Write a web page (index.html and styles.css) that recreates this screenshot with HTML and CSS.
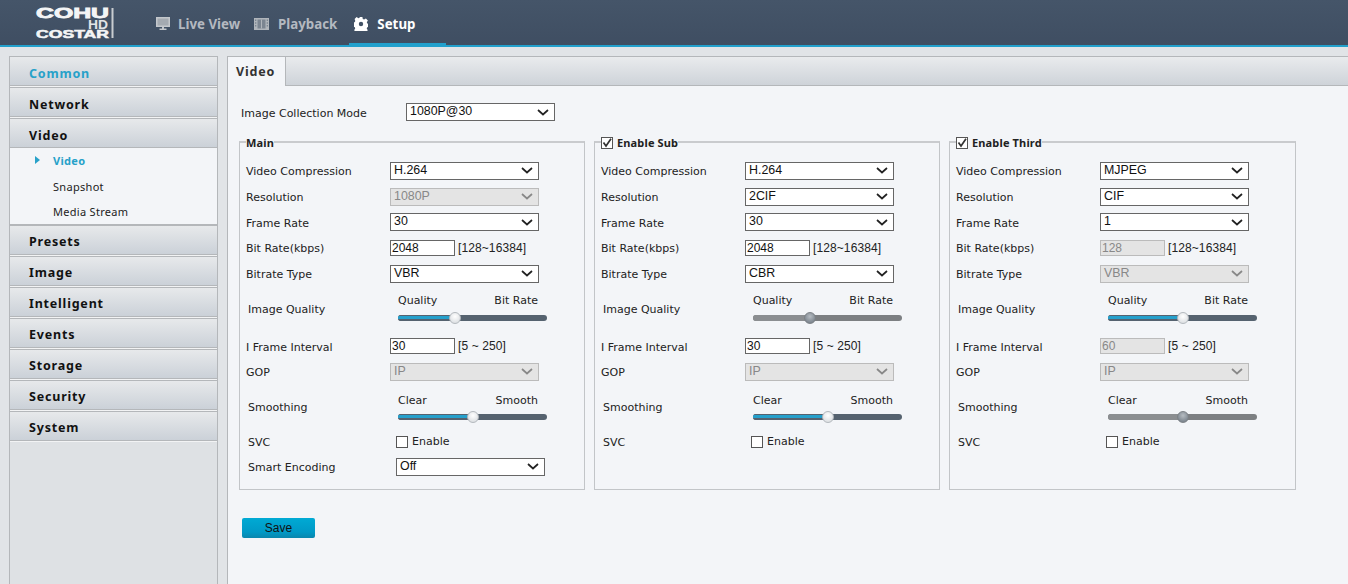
FILE: index.html
```html
<!DOCTYPE html>
<html lang="en">
<head>
<meta charset="utf-8">
<title>Setup - Video</title>
<link rel="stylesheet" href="styles.css">
</head>
<body>
<svg class="defs" width="0" height="0" aria-hidden="true">
  <symbol id="chev" viewBox="0 0 12 7"><path d="M1 1l5 4.5L11 1" fill="none" stroke="currentColor" stroke-width="1.7"/></symbol>
</svg>
<header class="topbar">
  <svg class="logo" width="80" height="33" viewBox="0 0 80 33">
    <text x="1" y="12" class="logo-big" textLength="73" lengthAdjust="spacingAndGlyphs">COHU</text>
    <text x="53" y="23" class="logo-hd" textLength="20" lengthAdjust="spacingAndGlyphs">HD</text>
    <text x="1" y="32" class="logo-small" textLength="73" lengthAdjust="spacingAndGlyphs">COSTAR</text>
    <rect x="76.500" y="2" width="2" height="30" fill="#c8ccd0"/>
  </svg>
  <nav class="nav">
    <a class="nav-item">
      <svg width="14" height="13" viewBox="0 0 14 13"><path fill="#c3c7cc" d="M0 0h14v10H8v1.500h2.500V13H3.500v-1.500H6V10H0z"/><path fill="#a4aab1" d="M1.500 1.500h11v7h-11z"/></svg>
      <span>Live View</span>
    </a>
    <a class="nav-item">
      <svg width="15" height="12" viewBox="0 0 15 12"><path fill="#b0b5bb" d="M0 0h15v12H0z"/><path fill="#7b8591" d="M3.500 1.500h8v9h-8zM1 1.500h1.300v1.500H1zM1 4.200h1.300v1.500H1zM1 7h1.300v1.500H1zM12.700 1.500H14v1.500h-1.300zM12.700 4.200H14v1.500h-1.300zM12.700 7H14v1.500h-1.300z"/><path fill="#b0b5bb" d="M7 1.500h1v9H7z"/></svg>
      <span>Playback</span>
    </a>
    <a class="nav-item nav-active">
      <svg width="14" height="14" viewBox="0 0 14 14"><path fill="#fff" fill-rule="evenodd" d="M5.600 0h2.800l.4 2 1.300.6 1.800-1.100 2 2-1.100 1.800.5 1.300 2 .4v2.800l-2 .4-.6 1.300 1.100 1.800-2 2-1.800-1.100-1.300.5-.4 2H5.600l-.4-2-1.300-.6-1.800 1.100-2-2 1.100-1.800-.5-1.300-2-.4V5.600l2-.4.6-1.300L.6 2.100l2-2 1.800 1.100 1.300-.5zM7 4.800a2.200 2.200 0 1 0 0 4.400 2.200 2.200 0 0 0 0-4.400z"/></svg>
      <span>Setup</span>
    </a>
  </nav>
</header>

<div class="layout">
  <aside class="sidebar">
    <div class="side-item side-current">Common</div>
    <div class="side-item">Network</div>
    <div class="side-item">Video</div>
    <ul class="side-sub">
      <li class="sub-current">Video</li>
      <li>Snapshot</li>
      <li>Media Stream</li>
    </ul>
    <div class="side-item">Presets</div>
    <div class="side-item">Image</div>
    <div class="side-item">Intelligent</div>
    <div class="side-item">Events</div>
    <div class="side-item">Storage</div>
    <div class="side-item">Security</div>
    <div class="side-item">System</div>
  </aside>

  <main class="content">
    <div class="tabs"><div class="tab">Video</div></div>
    <div class="body">
      <div class="mode-row">
        <label class="mode-label">Image Collection Mode</label>
        <div class="pick pick-mode"><span>1080P@30</span><svg class="chev"><use href="#chev"/></svg></div>
      </div>

      <div class="panels">
        <fieldset class="panel">
          <legend class="legend"><span>Main</span></legend>
          <div class="row"><span class="lbl">Video Compression</span><div class="pick"><span>H.264</span><svg class="chev"><use href="#chev"/></svg></div></div>
          <div class="row"><span class="lbl">Resolution</span><div class="pick off"><span>1080P</span><svg class="chev"><use href="#chev"/></svg></div></div>
          <div class="row"><span class="lbl">Frame Rate</span><div class="pick"><span>30</span><svg class="chev"><use href="#chev"/></svg></div></div>
          <div class="row"><span class="lbl">Bit Rate(kbps)</span><input class="num" value="2048"><span class="hint">[128~16384]</span></div>
          <div class="row"><span class="lbl">Bitrate Type</span><div class="pick"><span>VBR</span><svg class="chev"><use href="#chev"/></svg></div></div>
          <div class="row-slider"><span class="lbl lbl-in">Image Quality</span>
            <div class="slider"><div class="ends"><span>Quality</span><span>Bit Rate</span></div><div class="track"><div class="fill" style="width:57px"></div><div class="thumb" style="left:57px"></div></div></div></div>
          <div class="row"><span class="lbl">I Frame Interval</span><input class="num" value="30"><span class="hint">[5 ~ 250]</span></div>
          <div class="row"><span class="lbl">GOP</span><div class="pick off"><span>IP</span><svg class="chev"><use href="#chev"/></svg></div></div>
          <div class="row-slider row-smooth"><span class="lbl lbl-in">Smoothing</span>
            <div class="slider"><div class="ends"><span>Clear</span><span>Smooth</span></div><div class="track"><div class="fill" style="width:75px"></div><div class="thumb" style="left:75px"></div></div></div></div>
          <div class="row row-svc"><span class="lbl lbl-in">SVC</span><label class="check"><span class="box"></span>Enable</label></div>
          <div class="row row-smart"><span class="lbl lbl-in">Smart Encoding</span><div class="pick"><span>Off</span><svg class="chev"><use href="#chev"/></svg></div></div>
        </fieldset>

        <fieldset class="panel">
          <legend class="legend"><span class="box box-on"><svg width="12" height="12" viewBox="0 0 12 12"><path d="M2.500 5.500l2.500 3.500L10 1.800" fill="none" stroke="#333" stroke-width="1.700"/></svg></span><span>Enable Sub</span></legend>
          <div class="row"><span class="lbl">Video Compression</span><div class="pick"><span>H.264</span><svg class="chev"><use href="#chev"/></svg></div></div>
          <div class="row"><span class="lbl">Resolution</span><div class="pick"><span>2CIF</span><svg class="chev"><use href="#chev"/></svg></div></div>
          <div class="row"><span class="lbl">Frame Rate</span><div class="pick"><span>30</span><svg class="chev"><use href="#chev"/></svg></div></div>
          <div class="row"><span class="lbl">Bit Rate(kbps)</span><input class="num" value="2048"><span class="hint">[128~16384]</span></div>
          <div class="row"><span class="lbl">Bitrate Type</span><div class="pick"><span>CBR</span><svg class="chev"><use href="#chev"/></svg></div></div>
          <div class="row-slider"><span class="lbl lbl-in">Image Quality</span>
            <div class="slider"><div class="ends"><span>Quality</span><span>Bit Rate</span></div><div class="track track-off"><div class="fill" style="width:57px"></div><div class="thumb" style="left:57px"></div></div></div></div>
          <div class="row"><span class="lbl">I Frame Interval</span><input class="num" value="30"><span class="hint">[5 ~ 250]</span></div>
          <div class="row"><span class="lbl">GOP</span><div class="pick off"><span>IP</span><svg class="chev"><use href="#chev"/></svg></div></div>
          <div class="row-slider row-smooth"><span class="lbl lbl-in">Smoothing</span>
            <div class="slider"><div class="ends"><span>Clear</span><span>Smooth</span></div><div class="track"><div class="fill" style="width:75px"></div><div class="thumb" style="left:75px"></div></div></div></div>
          <div class="row row-svc"><span class="lbl lbl-in">SVC</span><label class="check"><span class="box"></span>Enable</label></div>
        </fieldset>

        <fieldset class="panel panel-last">
          <legend class="legend"><span class="box box-on"><svg width="12" height="12" viewBox="0 0 12 12"><path d="M2.500 5.500l2.500 3.500L10 1.800" fill="none" stroke="#333" stroke-width="1.700"/></svg></span><span>Enable Third</span></legend>
          <div class="row"><span class="lbl">Video Compression</span><div class="pick"><span>MJPEG</span><svg class="chev"><use href="#chev"/></svg></div></div>
          <div class="row"><span class="lbl">Resolution</span><div class="pick"><span>CIF</span><svg class="chev"><use href="#chev"/></svg></div></div>
          <div class="row"><span class="lbl">Frame Rate</span><div class="pick"><span>1</span><svg class="chev"><use href="#chev"/></svg></div></div>
          <div class="row"><span class="lbl">Bit Rate(kbps)</span><input class="num num-off" value="128" disabled><span class="hint">[128~16384]</span></div>
          <div class="row"><span class="lbl">Bitrate Type</span><div class="pick off"><span>VBR</span><svg class="chev"><use href="#chev"/></svg></div></div>
          <div class="row-slider"><span class="lbl lbl-in">Image Quality</span>
            <div class="slider"><div class="ends"><span>Quality</span><span>Bit Rate</span></div><div class="track"><div class="fill" style="width:75px"></div><div class="thumb" style="left:75px"></div></div></div></div>
          <div class="row"><span class="lbl">I Frame Interval</span><input class="num num-off" value="60" disabled><span class="hint">[5 ~ 250]</span></div>
          <div class="row"><span class="lbl">GOP</span><div class="pick off"><span>IP</span><svg class="chev"><use href="#chev"/></svg></div></div>
          <div class="row-slider row-smooth"><span class="lbl lbl-in">Smoothing</span>
            <div class="slider"><div class="ends"><span>Clear</span><span>Smooth</span></div><div class="track track-off"><div class="fill" style="width:75px"></div><div class="thumb" style="left:75px"></div></div></div></div>
          <div class="row row-svc"><span class="lbl lbl-in">SVC</span><label class="check"><span class="box"></span>Enable</label></div>
        </fieldset>
      </div>

      <button class="save" type="button">Save</button>
    </div>
  </main>
</div>
</body>
</html>
```

FILE: styles.css
```css
* { box-sizing: border-box; }
html, body { margin: 0; height: 100%; overflow: hidden; }
body {
  background: #e1e4e7;
  font-family: "DejaVu Sans", sans-serif;
  font-size: 11px;
  color: #222;
  display: flex;
  flex-direction: column;
}
.defs { position: absolute; }

.topbar {
  height: 47px;
  flex: none;
  display: flex;
  background: linear-gradient(#455569, #3f4e62);
  border-bottom: 2px solid #22a0cc;
}
.logo { margin: 6px 0 0 35px; flex: none; }
.logo text { fill: #f4f5f6; font-family: "Liberation Sans", sans-serif; font-weight: 700; }
.logo-big { font-size: 14px; stroke: #f4f5f6; stroke-width: .8px; }
.logo-hd { font-size: 13px; opacity: .9; }
.logo-small { font-size: 10px; stroke: #f4f5f6; stroke-width: .5px; }
.nav { display: flex; margin-left: 36px; height: 47px; }
.nav-item {
  display: flex;
  align-items: center;
  gap: 8px;
  padding: 0 5px;
  color: #b4b9c0;
  font-family: "Noto Sans", sans-serif;
  font-size: 13.3px;
  font-weight: 700;
  height: 47px;
  margin-right: 4px;
}
.nav-item + .nav-item { gap: 9px; }
.nav-active {
  color: #fff;
  width: 97px;
  margin: 0 0 0 3px;
  padding-top: 4px;
  border-bottom: 4px solid #22a0cc;
}

.layout { flex: 1; display: flex; padding: 9px 0 0 9px; min-height: 0; }
.sidebar {
  width: 209px;
  flex: none;
  background: #dee1e4;
  border: 1px solid #b4b7ba;
  border-width: 0 1px;
  margin-right: 9px;
}
.side-item {
  height: 30px;
  margin-bottom: 1px;
  padding: 0 0 0 19px;
  line-height: 33px;
  font-weight: 700;
  font-size: 12.5px;
  letter-spacing: .8px;
  font-family: "Noto Sans", sans-serif;
  color: #111;
  background: linear-gradient(#e7e9eb, #cbd1d8);
  border-top: 1px solid #b4b7ba;
  border-bottom: 1px solid #b4b7ba;
  box-shadow: 0 1px 0 #f2f3f4;
}
.side-sub ~ .side-item { line-height: 31px; }
.side-current { color: #27a1c9; }
.side-sub {
  list-style: none;
  margin: -1px 0 0;
  padding: 0 0 0 43px;
  height: 77px;
  background: #f3f5f8;
  border-bottom: 1px solid #b4b7ba;
}
.side-sub li { height: 25.5px; line-height: 25px; position: relative; color: #222; font-family: "Noto Sans", sans-serif; letter-spacing: .3px; }
.sub-current { color: #27a1c9 !important; font-weight: 700; }
.sub-current::before {
  content: "";
  position: absolute;
  left: -18px;
  top: 8px;
  border-left: 5px solid #27a1c9;
  border-top: 4px solid transparent;
  border-bottom: 4px solid transparent;
}

.content {
  flex: 1;
  min-width: 0;
  background: #f3f5f8;
  border-left: 1px solid #b4b7ba;
  border-top: 1px solid #b4b7ba;
}
.tabs {
  height: 29px;
  background: linear-gradient(#e9ebed, #ced3d9);
  border-bottom: 1px solid #b4b7ba;
  display: flex;
}
.tab {
  width: 58px;
  height: 29px;
  background: #f3f5f8;
  border-right: 1px solid #b4b7ba;
  font-family: "Noto Sans", sans-serif;
  font-weight: 700;
  font-size: 12.5px;
  letter-spacing: .8px;
  padding-left: 8px;
  line-height: 30px;
  color: #333;
}
.body { padding: 17px 0 0 11px; }
.mode-row { display: flex; align-items: center; height: 18px; padding-left: 2px; }
.mode-label { width: 165px; flex: none; padding-top: 2px; }
.pick {
  width: 149px;
  height: 18px;
  flex: none;
  border: 1px solid #666;
  background: #fff;
  font-family: "Liberation Sans", sans-serif;
  font-size: 12.4px;
  color: #111;
  display: flex;
  align-items: center;
  justify-content: space-between;
  padding: 0 5px 2px 3px;
}
.pick .chev { width: 12px; height: 7px; color: #222; margin-top: 2px; }
.off { background: #e4e4e4; border-color: #bbb; color: #888; }
.off .chev { color: #888; }

.panels { display: flex; gap: 9px; margin-top: 13px; align-items: flex-start; }
.panel {
  width: 346px;
  height: 356px;
  margin: 0;
  padding: 0 0 0 6px;
  border: 1px solid #c2c5c8;
  border-width: 2px 1px 1px 1px;
  border-top-color: #c9cbce;
  min-width: 0;
}
.panel-last { width: 347px; }
.legend {
  padding: 1px 0 0;
  margin-left: 0;
  height: 16px;
  display: flex;
  align-items: center;
  gap: 4px;
  font-family: "Noto Sans", sans-serif;
  font-weight: 700;
  font-size: 11px;
  letter-spacing: .15px;
  color: #222;
}
.row { display: flex; align-items: center; height: 25.7px; }
.panel > .row:first-of-type { margin-top: 8px; }
.lbl { width: 144px; flex: none; padding-top: 2px; }
.lbl-in { padding-left: 2px; }
.num {
  width: 65px;
  height: 16px;
  border: 1px solid #666;
  background: #fff;
  padding: 0 1px;
  font-family: "Liberation Sans", sans-serif;
  font-size: 12px;
  color: #111;
  outline: 0;
  border-radius: 0;
}
.num-off { background: #e4e4e4; border-color: #bbb; color: #888; }
.hint { margin-left: 3px; font-family: "Liberation Sans", sans-serif; font-size: 12px; letter-spacing: .1px; }
.row-slider { display: flex; height: 47px; align-items: center; }
.row-slider .lbl { width: 146px; padding: 0 0 1px 2px; }
.slider { width: 149px; margin-left: 6px; align-self: flex-start; padding-top: 8px; }
.ends { display: flex; justify-content: space-between; width: 140px; height: 21px; line-height: 14px; font-size: 11px; }
.row-smooth .slider { padding-top: 9px; }
.row-smooth .ends { height: 20px; }
.track {
  position: relative;
  height: 6px;
  border-radius: 3px;
  background: #55626f;
}
.fill { height: 6px; background: linear-gradient(#55626f 0, #55626f 1px, #25a0cc 1px, #25a0cc 4px, #55626f 4px); border-radius: 3px 0 0 3px; }
.thumb {
  position: absolute;
  top: -3px;
  width: 12px;
  height: 12px;
  margin-left: -6px;
  border-radius: 50%;
  background: radial-gradient(circle at 50% 35%, #fff, #d3d7db);
  border: 1px solid #b4b9be;
}
.track-off { background: #7c7f82; }
.track-off .fill { background: #8b8e91; }
.track-off .thumb { background: radial-gradient(circle at 50% 35%, #b6bcc2, #6a747e); border-color: #7c8186; }
.row-svc { height: 20px; }
.row-smart { height: 30px; }
.panel .row-svc .lbl, .panel .row-smart .lbl { width: 150px; }
.check { display: flex; align-items: center; gap: 4px; }
.box {
  width: 12px;
  height: 12px;
  flex: none;
  border: 1px solid #555;
  background: #fff;
  display: block;
}
.box-on svg { display: block; margin: -1px; }
.save {
  display: block;
  width: 73px;
  height: 20px;
  margin: 28px 0 0 3px;
  padding: 0 0 1px;
  border: 0;
  border-radius: 2px;
  background: linear-gradient(#00aad4 0, #0099c6 70%, #0a86ad);
  font-family: "Liberation Sans", sans-serif;
  font-size: 12px;
  color: #111;
}
```
